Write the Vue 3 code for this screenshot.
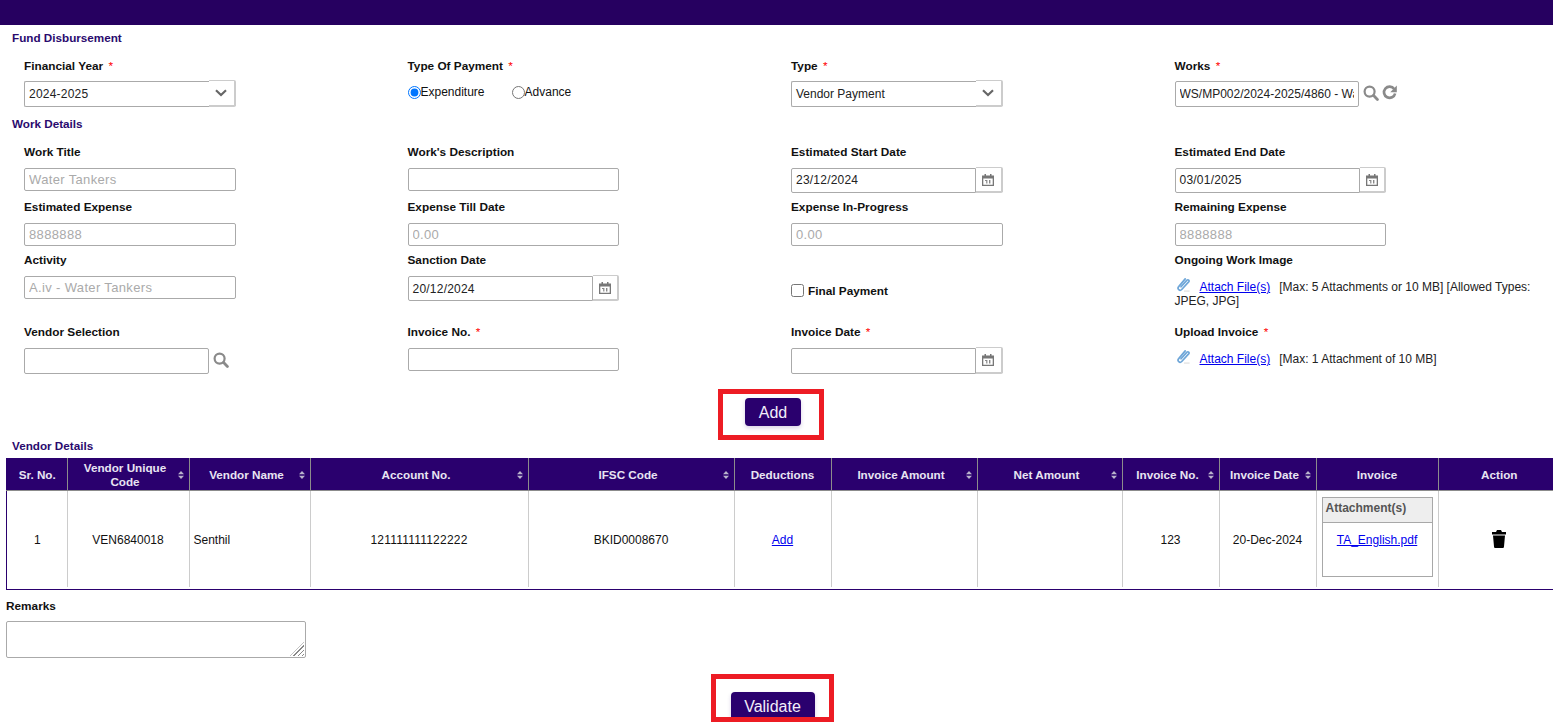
<template>
  <div class="page">
    <svg class="sprites" width="0" height="0">
      <defs>
        <symbol id="i-cal" viewBox="0 0 14 14">
          <path fill="#777" d="M1 2.5h2.5V1h1.5v1.5h4V1h1.5v1.5H13V13H1zM2.3 5.6v6.1h9.4V5.6z" />
          <path fill="#888" d="M4 7h2.4v3.6H5.2V8H4zM8 7h1.4v3.6H8z" />
        </symbol>
        <symbol id="i-search" viewBox="0 0 16 16">
          <path fill="none" stroke="#8a8a8a" stroke-width="2.2" d="M6.6 1.6a5 5 0 1 0 0 10a5 5 0 0 0 0-10z" />
          <path fill="none" stroke="#8a8a8a" stroke-width="2.8" stroke-linecap="round" d="M10.6 10.6l3.8 3.8" />
        </symbol>
        <symbol id="i-clip" viewBox="0 0 16 16">
          <path fill="none" stroke="#6ea6d8" stroke-width="1.8" stroke-linecap="round" d="M5.4 10.4l6.300-7c1.200-1.300 3 .4 1.800 1.800l-7.400 8.100c-2 2.200-5.300-.6-3.200-3L9.800 2" />
          <path fill="none" stroke="#d5d5d5" stroke-width="1" d="M8.500 15h6" />
        </symbol>
        <symbol id="i-chevron" viewBox="0 0 12 8">
          <path fill="none" stroke="#666" stroke-width="2.200" d="M1 1.300l5 4.700l5-4.700" />
        </symbol>
      </defs>
    </svg>

    <div class="topbar"></div>

    <div class="section-title first">Fund Disbursement</div>
    <div class="grid row-one">
      <div class="field">
        <label>Financial Year <span class="req">*</span></label>
        <div class="picker select">
          <div class="picker-value num">2024-2025</div>
          <span class="picker-btn"><svg width="12" height="8"><use href="#i-chevron" /></svg></span>
        </div>
      </div>
      <div class="field">
        <label>Type Of Payment <span class="req">*</span></label>
        <div class="radios">
          <label class="radio"><input type="radio" name="pay" checked />Expenditure</label>
          <label class="radio"><input type="radio" name="pay" />Advance</label>
        </div>
      </div>
      <div class="field">
        <label>Type <span class="req">*</span></label>
        <div class="picker select">
          <div class="picker-value">Vendor Payment</div>
          <span class="picker-btn"><svg width="12" height="8"><use href="#i-chevron" /></svg></span>
        </div>
      </div>
      <div class="field">
        <label>Works <span class="req">*</span></label>
        <div class="with-icons">
          <input class="text works" type="text" value="WS/MP002/2024-2025/4860 - Water Tankers" />
          <svg class="tool" width="16" height="16"><use href="#i-search" /></svg>
          <svg class="tool" width="15" height="15" viewBox="0 0 16 16">
            <path fill="none" stroke="#8a8a8a" stroke-width="2.800" d="M13 4.200A6 6 0 1 0 14 9" />
            <path fill="#8a8a8a" d="M15.800 .6v7H8.800z" />
          </svg>
        </div>
      </div>
    </div>

    <div class="section-title">Work Details</div>
    <div class="grid row-details">
      <div class="field tall">
        <label>Work Title</label>
        <input class="text off" type="text" value="Water Tankers" disabled />
      </div>
      <div class="field tall">
        <label>Work's Description</label>
        <input class="text" type="text" />
      </div>
      <div class="field tall">
        <label>Estimated Start Date</label>
        <div class="picker date">
          <div class="picker-value num">23/12/2024</div>
          <span class="picker-btn"><svg width="14" height="14"><use href="#i-cal" /></svg></span>
        </div>
      </div>
      <div class="field tall">
        <label>Estimated End Date</label>
        <div class="picker date">
          <div class="picker-value num">03/01/2025</div>
          <span class="picker-btn"><svg width="14" height="14"><use href="#i-cal" /></svg></span>
        </div>
      </div>

      <div class="field tall">
        <label>Estimated Expense</label>
        <input class="text off" type="text" value="8888888" disabled />
      </div>
      <div class="field tall">
        <label>Expense Till Date</label>
        <input class="text off" type="text" value="0.00" disabled />
      </div>
      <div class="field tall">
        <label>Expense In-Progress</label>
        <input class="text off" type="text" value="0.00" disabled />
      </div>
      <div class="field tall">
        <label>Remaining Expense</label>
        <input class="text off" type="text" value="8888888" disabled />
      </div>

      <div class="field tall">
        <label>Activity</label>
        <input class="text off" type="text" value="A.iv - Water Tankers" disabled />
      </div>
      <div class="field tall">
        <label>Sanction Date</label>
        <div class="picker date">
          <div class="picker-value num sanction">20/12/2024</div>
          <span class="picker-btn"><svg width="14" height="14"><use href="#i-cal" /></svg></span>
        </div>
      </div>
      <div class="field final">
        <label class="check"><input type="checkbox" />Final Payment</label>
      </div>
      <div class="field tall">
        <label>Ongoing Work Image</label>
        <div class="attach">
          <svg class="clip" width="15" height="15"><use href="#i-clip" /></svg>
          <a href="#" class="link">Attach File(s)</a>
          <span class="hint">[Max: 5 Attachments or 10 MB] [Allowed Types:</span>
          <br />
          <span>JPEG, JPG]</span>
        </div>
      </div>

      <div class="field tall">
        <label>Vendor Selection</label>
        <div class="with-icons">
          <input class="text vendor" type="text" />
          <svg class="tool" width="16" height="16"><use href="#i-search" /></svg>
        </div>
      </div>
      <div class="field tall">
        <label>Invoice No. <span class="req">*</span></label>
        <input class="text" type="text" />
      </div>
      <div class="field tall">
        <label>Invoice Date <span class="req">*</span></label>
        <div class="picker date invoice">
          <div class="picker-value"></div>
          <span class="picker-btn"><svg width="14" height="14"><use href="#i-cal" /></svg></span>
        </div>
      </div>
      <div class="field tall">
        <label>Upload Invoice <span class="req">*</span></label>
        <div class="attach">
          <svg class="clip" width="15" height="15"><use href="#i-clip" /></svg>
          <a href="#" class="link">Attach File(s)</a>
          <span class="hint">[Max: 1 Attachment of 10 MB]</span>
        </div>
      </div>
    </div>

    <div class="actions add-actions">
      <div class="mark add-mark">
        <button class="btn add">Add</button>
      </div>
    </div>

    <div class="section-title vendor-title">Vendor Details</div>
    <div class="table-wrap">
      <table>
        <colgroup>
          <col v-for="c in columns" :key="c.title" :style="{ width: c.width + 'px' }" />
        </colgroup>
        <thead>
          <tr>
            <th v-for="c in columns" :key="c.title">
              <div class="th-inner">
                <span class="th-text">{{ c.title }}</span>
                <svg v-if="c.sort" class="sort" width="6" height="8" viewBox="0 0 6 8">
                  <path fill="#b9b3cc" d="M3 0l3 3.200H0zM3 8L0 4.800h6z" />
                </svg>
              </div>
            </th>
          </tr>
        </thead>
        <tbody>
          <tr>
            <td class="first-cell">1</td>
            <td>VEN6840018</td>
            <td class="left">Senthil</td>
            <td class="num">121111111122222</td>
            <td>BKID0008670</td>
            <td><a href="#" class="link">Add</a></td>
            <td></td>
            <td></td>
            <td>123</td>
            <td>20-Dec-2024</td>
            <td>
              <div class="attachment">
                <div class="attachment-head">Attachment(s)</div>
                <div class="attachment-body"><a href="#" class="link">TA_English.pdf</a></div>
              </div>
            </td>
            <td>
              <svg class="trash" width="14" height="18" viewBox="0 0 14 18">
                <path fill="#000" d="M5 0h4l1 2h4v2.500H0V2h4zM1 5.500h12l-1 11c0 1-.7 1.500-1.500 1.500h-7C2.700 18 2 17.500 2 16.500z" />
              </svg>
            </td>
          </tr>
        </tbody>
      </table>
    </div>

    <div class="remarks">
      <label>Remarks</label>
      <div class="remarks-box">
        <textarea></textarea>
        <span class="grip"></span>
      </div>
    </div>

    <div class="actions">
      <div class="mark validate-mark">
        <button class="btn validate">Validate</button>
      </div>
    </div>
  </div>
</template>

<script setup>
const columns = [
  { title: "Sr. No.", width: 61, sort: false },
  { title: "Vendor Unique Code", width: 122, sort: true },
  { title: "Vendor Name", width: 121, sort: true },
  { title: "Account No.", width: 218, sort: true },
  { title: "IFSC Code", width: 206, sort: true },
  { title: "Deductions", width: 97, sort: false },
  { title: "Invoice Amount", width: 146, sort: true },
  { title: "Net Amount", width: 145, sort: true },
  { title: "Invoice No.", width: 97, sort: true },
  { title: "Invoice Date", width: 97, sort: true },
  { title: "Invoice", width: 122, sort: false },
  { title: "Action", width: 122, sort: false },
];
</script>

<style>
html,
body {
  margin: 0;
  overflow: hidden;
  background: #fff;
}
</style>

<style scoped>
.page {
  width: 1553px;
  height: 727px;
  overflow: hidden;
  font-family: "Liberation Sans", Arial, sans-serif;
  font-size: 12px;
  color: #111;
}

.sprites {
  position: absolute;
}

.topbar {
  height: 25px;
  background: #260060;
}

.section-title {
  height: 26px;
  line-height: 26px;
  padding-left: 12px;
  font-size: 11.7px;
  font-weight: bold;
  color: #2a0a6e;
}

.vendor-title {
  height: 21px;
  line-height: 18px;
}

.grid {
  display: grid;
  grid-template-columns: 383.5px 383.5px 383.5px 378px;
  padding-left: 24px;
}

.row-one {
  height: 60px;
  padding-top: 7px;
  box-sizing: border-box;
}

.row-details {
  grid-template-rows: 55px 53px 72px 62px;
  padding-top: 7px;
}

.field > label {
  display: block;
  height: 16px;
  line-height: 16px;
  margin-bottom: 7px;
  font-size: 11.8px;
  font-weight: bold;
}

.field.tall > label {
  margin-bottom: 8px;
}

.req {
  color: #f00;
  font-weight: normal;
  margin-left: 2px;
}

.num {
  letter-spacing: 0.22px;
}

.text {
  display: block;
  box-sizing: border-box;
  width: 211.5px;
  height: 23px;
  margin: 0;
  padding: 0 4px;
  border: 1px solid #aaa;
  border-radius: 2px;
  background: #fff;
  font: 12px "Liberation Sans", Arial, sans-serif;
  color: #222;
  outline: none;
}

.text.off {
  font-size: 13px;
  letter-spacing: 0.35px;
  color: #aaa;
}

.text.works {
  width: 184.5px;
  height: 26px;
}

.text.vendor {
  width: 185px;
  height: 26px;
}

.with-icons {
  display: flex;
  align-items: center;
  gap: 4px;
}

.with-icons .tool {
  margin-top: -3px;
}

.with-icons .tool + .tool {
  margin-left: -1px;
}

.picker {
  display: flex;
  width: 211.5px;
  height: 25px;
}

.picker-value {
  box-sizing: border-box;
  flex: 1;
  padding: 0 4px;
  line-height: 22px;
  border: 1px solid #aaa;
  border-radius: 2px 0 0 2px;
  background: #fff;
  color: #222;
}

.picker-value.sanction {
  line-height: 24px;
}

.picker-btn {
  display: flex;
  align-items: center;
  justify-content: center;
  box-sizing: border-box;
  width: 26.5px;
  margin-top: -1px;
  border: 1px solid #ccc;
  border-bottom-width: 2px;
  border-right: 2px solid #ccc;
  border-left: 0;
  border-radius: 0 2px 2px 0;
  background: #fff;
}

.picker.select {
  height: 26px;
}

.picker.select .picker-value {
  line-height: 24px;
  border-right: 0;
}

.picker.invoice {
  height: 26px;
}

.radios {
  display: flex;
}

.radio {
  display: flex;
  align-items: center;
  height: 22px;
  margin-right: 27px;
}

.radio input {
  width: 13px;
  height: 13px;
  margin: 0;
}

.final {
  padding-top: 31px;
}

.final .check {
  display: flex;
  align-items: center;
  gap: 4px;
  margin: 0;
}

.check input {
  width: 13px;
  height: 13px;
  margin: -1px 0 0;
}

.attach {
  padding-top: 4px;
  line-height: 14px;
  color: #222;
}

.clip {
  margin: -7px 9px 0 1px;
  vertical-align: middle;
}

.link {
  color: #00e;
  text-decoration: underline;
}

.hint {
  margin-left: 9px;
}

.actions {
  display: flex;
  justify-content: center;
}

.add-actions {
  margin-top: 3px;
  margin-bottom: -3px;
}

.mark {
  box-sizing: border-box;
  display: flex;
  justify-content: center;
  border: 5px solid #ed1c24;
}

.add-mark {
  width: 106px;
  height: 51px;
  align-items: flex-start;
  margin-left: -11px;
  padding: 4px 0 0 4px;
}

.validate-mark {
  width: 123px;
  height: 48px;
  padding-top: 13px;
  overflow: hidden;
  margin-left: -8px;
}

.btn {
  border: 0;
  border-radius: 4px;
  background: #2a006e;
  color: #f2eefa;
  font: 16px "Liberation Sans", Arial, sans-serif;
  box-shadow: 0 2px 4px rgba(42, 0, 110, 0.18);
}

.btn.add {
  width: 56px;
  height: 28px;
  padding: 2px 0 0;
}

.btn.validate {
  flex: none;
  width: 84px;
  height: 28px;
  padding: 2px 0 0;
}

.table-wrap {
  box-sizing: border-box;
  width: 1547px;
  height: 132px;
  margin-left: 6px;
  border-left: 1px solid #2a006e;
  border-bottom: 1px solid #2a006e;
}

table {
  table-layout: fixed;
  width: 1554px;
  border-collapse: collapse;
  margin-left: -1px;
}

th {
  height: 32px;
  padding: 0;
  background: #2a006e;
  border-left: 1px solid #8c8c8c;
  border-bottom: 1px solid #8c8c8c;
  color: #e8e4f2;
  font-size: 11.7px;
  font-weight: bold;
  line-height: 14px;
  box-sizing: border-box;
}

th:first-child,
td:first-child {
  border-left: 0;
}

.th-inner {
  display: flex;
  align-items: center;
  padding: 2px 5px 0;
}

th:first-child .th-inner {
  padding-left: 7px;
}

.th-text {
  flex: 1;
  text-align: center;
}

.sort {
  flex: none;
}

td {
  box-sizing: border-box;
  height: 97px;
  padding: 2px 0 0;
  border-left: 1px solid #ccc;
  text-align: center;
  color: #111;
}

td.first-cell {
  padding-left: 2px;
}

td.left {
  text-align: left;
  padding-left: 4px;
}

.attachment {
  box-sizing: border-box;
  width: 111px;
  height: 80px;
  margin: -6px auto 0;
  border: 1px solid #a8a8a8;
  text-align: left;
}

.attachment-head {
  box-sizing: border-box;
  height: 25px;
  line-height: 20px;
  padding-left: 3px;
  background: #eee;
  border-bottom: 1px solid #a8a8a8;
  font-weight: bold;
  color: #555;
}

.attachment-body {
  padding-top: 10px;
  text-align: center;
}

.trash {
  display: block;
  margin: -2px auto 0;
}

.remarks {
  padding: 8px 0 0 6px;
}

.remarks label {
  display: block;
  height: 16px;
  line-height: 16px;
  margin-bottom: 7px;
  font-size: 11.8px;
  font-weight: bold;
}

.remarks-box {
  position: relative;
  width: 300px;
}

textarea {
  display: block;
  box-sizing: border-box;
  width: 300px;
  height: 37px;
  margin: 0;
  padding: 4px;
  border: 1px solid #aaa;
  border-radius: 2px;
  outline: none;
  resize: none;
}

.grip {
  position: absolute;
  right: 2px;
  bottom: 2px;
  width: 14px;
  height: 14px;
  background: repeating-linear-gradient(135deg, #888 0 1px, #fff 1px 3px);
  clip-path: polygon(100% 0, 100% 100%, 0 100%);
}

.remarks + .actions {
  margin-top: 16px;
}
</style>
